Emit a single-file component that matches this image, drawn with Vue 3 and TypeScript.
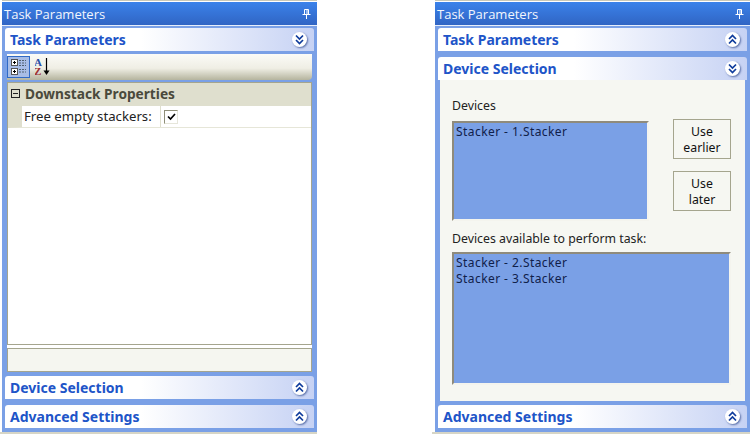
<script setup lang="ts">
interface Group { key: string; title: string; open: boolean }
interface Panel { id: string; groups: Group[] }

const panels: Panel[] = [
  {
    id: 'left',
    groups: [
      { key: 'task', title: 'Task Parameters', open: true },
      { key: 'device', title: 'Device Selection', open: false },
      { key: 'advanced', title: 'Advanced Settings', open: false },
    ],
  },
  {
    id: 'right',
    groups: [
      { key: 'task', title: 'Task Parameters', open: false },
      { key: 'device', title: 'Device Selection', open: true },
      { key: 'advanced', title: 'Advanced Settings', open: false },
    ],
  },
]
</script>

<template>
  <div class="screen">
    <section v-for="panel in panels" :key="panel.id" class="panel">
      <div class="titlebar">
        <span>Task Parameters</span>
        <svg class="pin" width="9" height="10" viewBox="0 0 9 10">
          <path d="M2.5 0.5h4v5h-4zM5 1v4M0.5 5.5h8M4.5 6v4" fill="none" stroke="#fff" stroke-width="1" />
        </svg>
      </div>
      <div class="groups">
        <template v-for="g in panel.groups" :key="g.key">
          <div class="head">
            <span>{{ g.title }}</span>
            <span class="toggle">
              <svg width="11" height="11" viewBox="0 0 11 11">
                <path
                  :d="g.open ? 'M2 1.5l3.5 3.5 3.5-3.5M2 6l3.5 3.5L9 6' : 'M2 5l3.5-3.5L9 5M2 9.5L5.5 6 9 9.5'"
                  fill="none"
                  stroke="#0f3c9c"
                  stroke-width="1.7"
                />
              </svg>
            </span>
          </div>

          <div v-if="g.open && g.key === 'task'" class="props">
            <div class="toolbar">
              <span class="tool active">
                <svg width="20" height="20" viewBox="0 0 20 20">
                  <rect x="2.500" y="2.500" width="6" height="6" fill="#fff" stroke="#555" />
                  <path d="M4 5.500h3M5.500 4v3" stroke="#000" />
                  <rect x="2.500" y="11.500" width="6" height="6" fill="#fff" stroke="#555" />
                  <path d="M4 14.500h3M5.500 13v3" stroke="#000" />
                  <path d="M10 3.500h7M10 6h7M10 8.500h7M10 12.500h7M10 15h7" stroke="#50606e" stroke-dasharray="2 1" />
                </svg>
              </span>
              <span class="tool">
                <svg width="20" height="20" viewBox="0 0 20 20">
                  <text x="-1" y="9" class="az blue">A</text>
                  <text x="-1" y="18" class="az red">Z</text>
                  <path d="M11.500 1v15" stroke="#000" stroke-width="1.200" />
                  <path d="M8.500 13.500h6L11.500 18z" fill="#000" />
                </svg>
              </span>
            </div>
            <div class="grid">
              <div class="category">
                <span class="expander"></span>
                <span>Downstack Properties</span>
              </div>
              <div class="row">
                <span class="name">Free empty stackers:</span>
                <span class="value">
                  <span class="check">
                    <svg width="9" height="8" viewBox="0 0 9 8">
                      <path d="M1 3.500l2.500 2.500L8 1" fill="none" stroke="#000" stroke-width="1.700" />
                    </svg>
                  </span>
                </span>
              </div>
            </div>
            <div class="splitter"></div>
            <div class="help"></div>
          </div>

          <div v-else-if="g.open" class="device">
            <div class="label first">Devices</div>
            <div class="upper">
              <div class="list short">Stacker - 1.Stacker</div>
              <div class="buttons">
                <div class="btn">Use<br />earlier</div>
                <div class="btn">Use<br />later</div>
              </div>
            </div>
            <div class="label second">Devices available to perform task:</div>
            <div class="list tall">Stacker - 2.Stacker<br />Stacker - 3.Stacker</div>
          </div>
        </template>
      </div>
    </section>
  </div>
</template>

<style>
html, body { margin: 0; background: #fff; }
</style>

<style scoped>
.screen {
  width: 750px;
  height: 434px;
  overflow: hidden;
  display: flex;
  justify-content: space-between;
  padding-left: 2px;
  box-sizing: border-box;
  font-family: "Noto Sans", sans-serif;
  font-size: 12px;
  color: #111;
}
.panel {
  width: 315px;
  height: 434px;
  box-sizing: border-box;
  padding: 2px 0;
  display: flex;
  flex-direction: column;
  background: #7aa0e6;
  background-clip: content-box;
  position: relative;
}
.panel::before {
  content: "";
  position: absolute;
  left: 0;
  right: 0;
  top: 0;
  height: 1px;
  background: #c9c8b8;
}
.panel::after {
  content: "";
  position: absolute;
  left: -3px;
  right: 0;
  bottom: 0;
  height: 2px;
  background: #d6d5c6;
}
.titlebar {
  height: 23px;
  flex: none;
  display: flex;
  align-items: center;
  justify-content: space-between;
  padding: 0 6px 0 2px;
  border-bottom: 1px solid #e6eefb;
  background: linear-gradient(#3b82ea, #3065c4);
  color: #f2f6fd;
  font-family: "Open Sans", sans-serif;
  font-size: 13px;
}
.groups {
  flex: 1;
  min-height: 0;
  display: flex;
  flex-direction: column;
  padding: 2px 3px 4px;
  gap: 6px;
}
.head {
  height: 23px;
  flex: none;
  display: flex;
  align-items: center;
  justify-content: space-between;
  padding: 0 7px 0 5px;
  border-radius: 3px 3px 0 0;
  background: linear-gradient(90deg, #fff 0%, #fff 44%, #c6d2f4 100%);
  color: #2054c8;
  font-family: "Noto Sans", sans-serif;
  font-weight: 700;
  font-size: 14px;
}
.toggle {
  width: 15px;
  height: 15px;
  border-radius: 50%;
  background: #fff;
  box-shadow: 1px 1px 2px #5a6fa8;
  display: flex;
  align-items: center;
  justify-content: center;
}
.props {
  flex: 1;
  min-height: 0;
  margin: -3px 2px -2px;
  display: flex;
  flex-direction: column;
}
.toolbar {
  height: 26px;
  flex: none;
  margin-bottom: 2px;
  display: flex;
  align-items: center;
  gap: 3px;
  border-radius: 0 0 4px 0;
  background: linear-gradient(#fbfbf7, #efeee4 55%, #b5b49e);
}
.tool {
  width: 23px;
  height: 22px;
  box-sizing: border-box;
  display: flex;
  align-items: center;
  justify-content: center;
}
.tool.active {
  border: 1px solid #316ac5;
  background: #a8bde6;
}
.az {
  font-family: "Liberation Serif", serif;
  font-weight: 700;
  font-size: 11px;
}
.blue { fill: #2a4fa8; }
.red { fill: #a03030; }
.grid {
  flex: 1;
  min-height: 0;
  background: #fff;
  border: 1px solid #a5a58e;
}
.category {
  height: 23px;
  padding-bottom: 2px;
  box-sizing: border-box;
  display: flex;
  align-items: center;
  gap: 5px;
  padding-left: 3px;
  background: #dfdfce;
  color: #4a4a3c;
  font-weight: 700;
  font-size: 13.700px;
}
.expander {
  width: 7px;
  height: 7px;
  border: 1px solid #222;
  background: linear-gradient(#222, #222) center / 5px 1px no-repeat;
}
.row {
  height: 22px;
  display: flex;
  border-left: 14px solid #dfdfce;
  border-bottom: 1px solid #e6e6d8;
  box-sizing: border-box;
}
.name {
  width: 136px;
  flex: none;
  padding-left: 2px;
  box-sizing: content-box;
  border-right: 1px solid #dfdfce;
  font-size: 13.200px;
  line-height: 21px;
  color: #222;
}
.value {
  padding-left: 3px;
  display: flex;
  align-items: center;
}
.check {
  width: 14px;
  height: 14px;
  box-sizing: border-box;
  display: flex;
  align-items: center;
  justify-content: center;
  border: 1px solid;
  border-color: #8f8f78 #e6e6da #e6e6da #8f8f78;
  background: #fff;
}
.splitter {
  height: 3px;
  flex: none;
  background: #fff;
}
.help {
  height: 24px;
  flex: none;
  box-sizing: border-box;
  border: 1px solid #a5a58e;
  background: #f5f6f0;
}
.device {
  flex: 1;
  min-height: 0;
  margin: -6px 2px -2px;
  padding: 0 14px 0 12px;
  background: #f6f7f2;
}
.label {
  font-size: 12.300px;
  line-height: 15px;
  color: #222;
}
.label.first { padding-top: 18px; }
.label.second { padding-top: 10px; margin-bottom: 6px; }
.upper {
  margin-top: 8px;
  display: flex;
  justify-content: space-between;
}
.list {
  box-sizing: border-box;
  border: 2px solid;
  border-color: #8f8b7c #f4f4ee #f4f4ee #8f8b7c;
  background: #7aa0e6;
  padding: 1px 2px;
  line-height: 16px;
  font-size: 12px;
  letter-spacing: 0.430px;
  color: #10204a;
}
.short { width: 197px; height: 100px; }
.tall { width: 279px; height: 133px; }
.buttons {
  display: flex;
  flex-direction: column;
  gap: 12px;
  margin-top: -2px;
}
.btn {
  width: 58px;
  height: 40px;
  box-sizing: border-box;
  border: 1px solid #a5a58e;
  background: #f6f7f2;
  text-align: center;
  line-height: 16px;
  padding-top: 4px;
  font-size: 12.300px;
  color: #111;
}
</style>
